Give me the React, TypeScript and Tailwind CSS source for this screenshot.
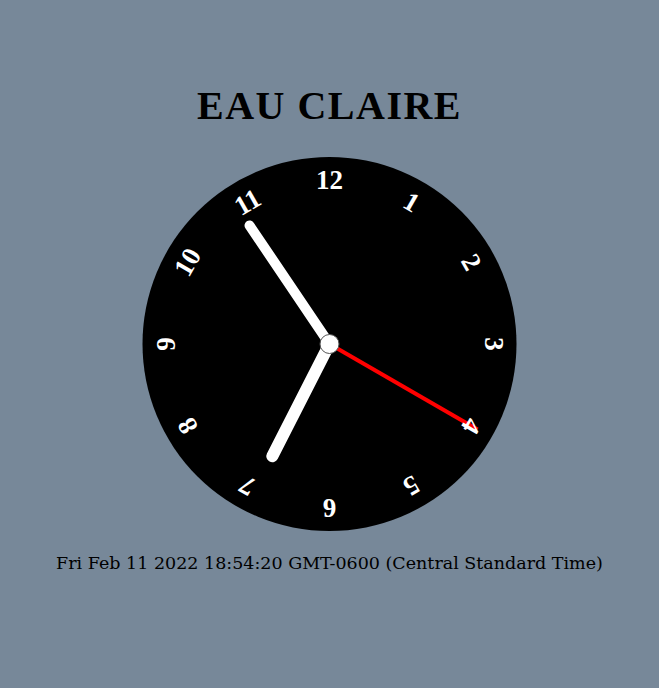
const CX = 187
const CY = 187

function handEnd(deg: number, len: number) {
  const r = (deg * Math.PI) / 180
  return { x: CX + Math.sin(r) * len, y: CY - Math.cos(r) * len }
}

function Clock() {
  const hour = handEnd(207, 126)
  const minute = handEnd(326, 143)
  const second = handEnd(120, 171)
  const nums = [12, 1, 2, 3, 4, 5, 6, 7, 8, 9, 10, 11]

  return (
    <svg width="375" height="375" viewBox="-0.5 0 375 375" className="block">
      <circle cx={CX} cy={CY} r="187" fill="#000" />
      <line x1={CX} y1={CY} x2={hour.x} y2={hour.y} stroke="#fff" strokeWidth="12" strokeLinecap="round" />
      <line x1={CX} y1={CY} x2={minute.x} y2={minute.y} stroke="#fff" strokeWidth="10" strokeLinecap="round" />
      <line x1={CX} y1={CY} x2={second.x} y2={second.y} stroke="#ff0000" strokeWidth="4" />
      <circle cx={CX} cy={CY} r="9.5" fill="#fff" stroke="#555" strokeWidth="1" />
      {nums.map((n, i) => (
        <text
          key={n}
          x={CX}
          y={CY - 164}
          transform={`rotate(${i * 30} ${CX} ${CY})`}
          textAnchor="middle"
          dominantBaseline="central"
          fill="#fff"
          fontSize="27"
          fontWeight="bold"
          style={{ fontFamily: '"Liberation Serif", serif' }}
        >
          {n}
        </text>
      ))}
    </svg>
  )
}

export default function App() {
  return (
    <div className="min-h-screen bg-[#778899] flex flex-col items-center pt-[86px] font-['Liberation_Serif',serif] text-black">
      <h1 className="text-[40px] leading-none font-bold tracking-[1.5px]">EAU CLAIRE</h1>
      <div className="mt-[31px]">
        <Clock />
      </div>
      <p className="mt-[23px] text-[17.5px] leading-none font-['DejaVu_Serif',serif]">
        Fri Feb 11 2022 18:54:20 GMT-0600 (Central Standard Time)
      </p>
    </div>
  )
}
